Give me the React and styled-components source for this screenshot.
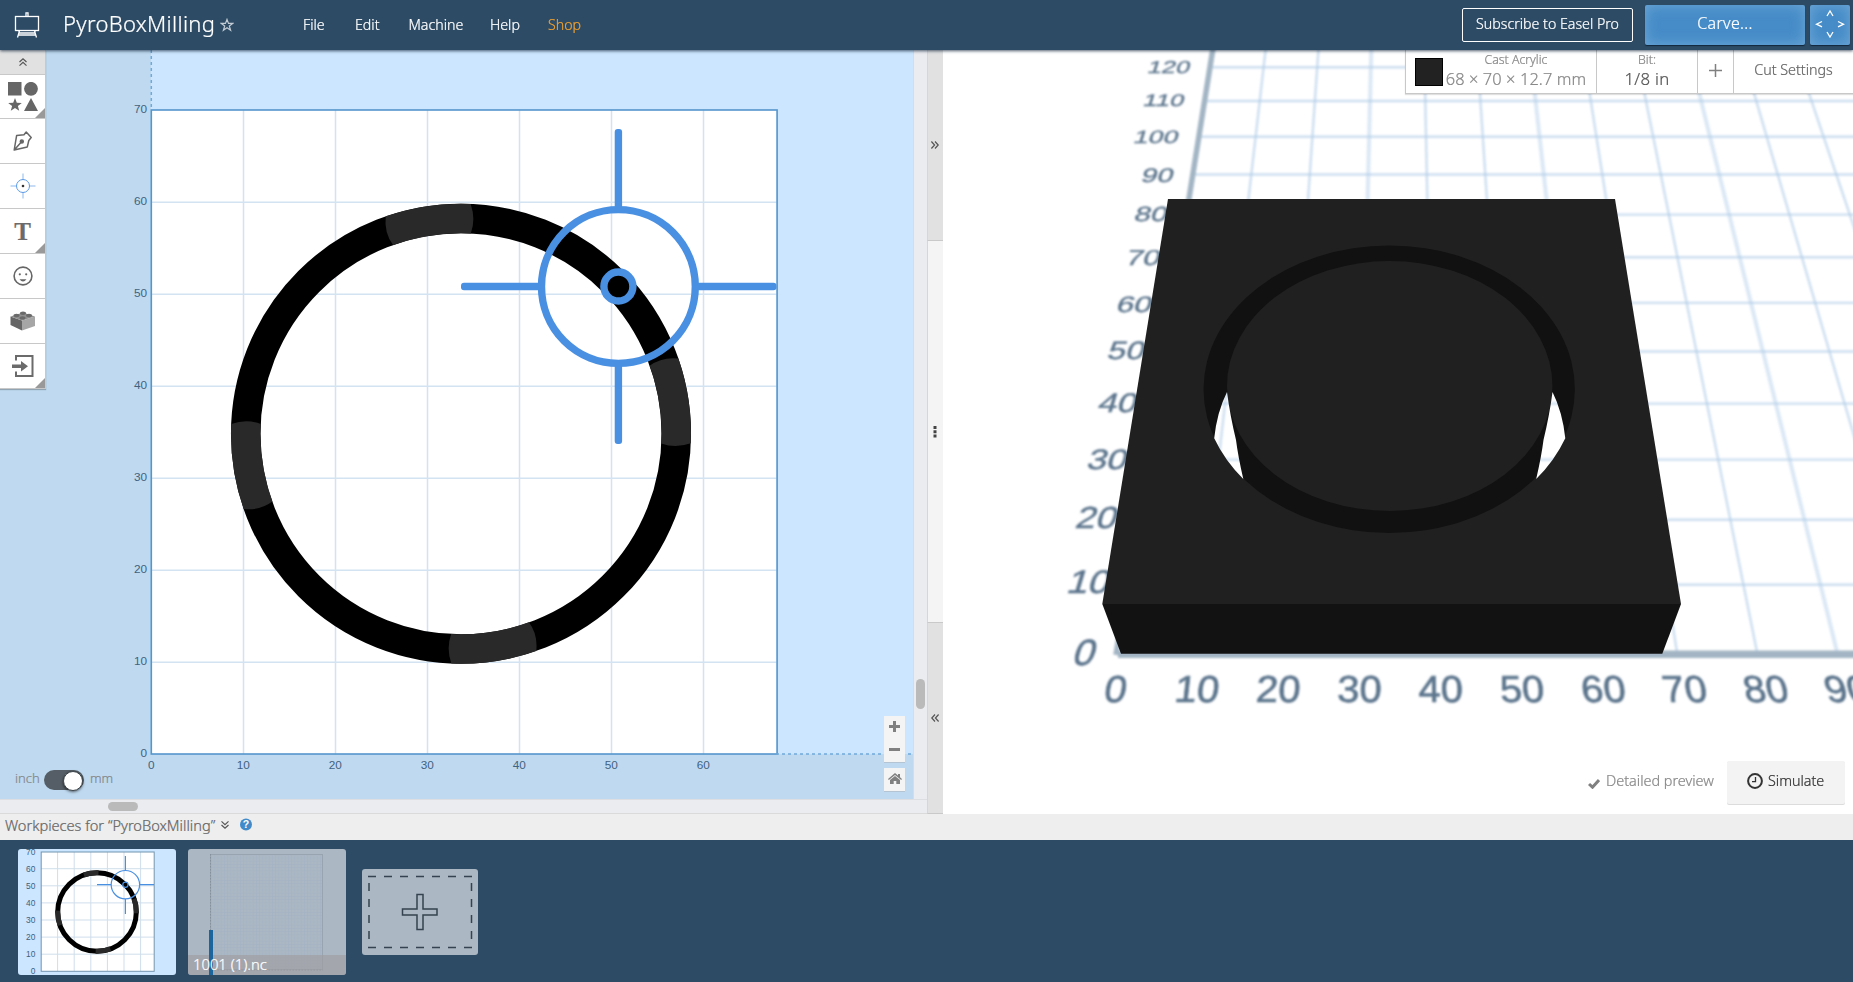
import React from "react";
import styled, { createGlobalStyle, css } from "styled-components";

const Global = createGlobalStyle`
  * { box-sizing: border-box; }
  html, body { margin: 0; padding: 0; overflow: hidden; }
  body { font-family: "Noto Sans", "Open Sans", sans-serif; font-weight: 300; background: #fff; -webkit-text-stroke: 0.22px; }
  svg { display: block; -webkit-text-stroke: 0; }
  button { -webkit-text-stroke: 0.22px; }
`;

const App = styled.div`
  width: 1853px;
  height: 982px;
  display: grid;
  grid-template-rows: 50px 764px 26px 142px;
  overflow: hidden;
`;

/* ---------- header ---------- */
const Header = styled.header`
  position: relative;
  z-index: 5;
  display: flex;
  align-items: center;
  padding: 0 3px 0 14px;
  background: #2d4b65;
  box-shadow: 0 1px 3px rgba(20, 40, 60, 0.75);
  color: #fff;
`;
const Title = styled.h1`
  margin: 0 0 5px 23px;
  width: 157px;
  font-size: 22px;
  font-weight: 300;
  line-height: 30px;
  letter-spacing: 0.3px;
  white-space: nowrap;
`;
const Menu = styled.nav`
  display: flex;
  flex: 1;
  margin: 0 0 1px 69px;
`;
const MenuItem = styled.a`
  width: ${(p) => p.$w}px;
  font-size: 14.2px;
  line-height: 20px;
  white-space: nowrap;
  color: ${(p) => (p.$accent ? "#f0a030" : "#fff")};
`;
const OutlineButton = styled.button`
  width: 171px;
  height: 34px;
  padding: 0 0 4px;
  margin-right: 12px;
  border: 1px solid #fff;
  border-radius: 2px;
  background: transparent;
  color: #fff;
  font: 300 14.2px "Noto Sans", sans-serif;
  white-space: nowrap;
`;
const BlueButton = styled.button`
  width: ${(p) => p.$w}px;
  height: 40px;
  padding: 0 0 4px;
  margin-right: ${(p) => p.$mr || 0}px;
  border: 0;
  border-radius: 2px;
  background: #468cc8;
  box-shadow: inset 0 0 14px rgba(150, 195, 230, 0.5), 0 1px 1px rgba(10, 30, 50, 0.8);
  color: #fff;
  font: 300 16px "Noto Sans", sans-serif;
  letter-spacing: 0.3px;
  display: flex;
  align-items: center;
  justify-content: center;
`;

/* ---------- main area ---------- */
const Main = styled.main`
  display: grid;
  grid-template-columns: 927px 16px 910px;
  min-height: 0;
`;
const Editor = styled.section`
  position: relative;
  display: grid;
  grid-template-columns: 913px 14px;
  grid-template-rows: 749px 15px;
  background: #ebecf0;
`;
const ScrollV = styled.div`
  border-left: 1px solid #d9dbe0;
  padding: 629px 0 0 2px;
`;
const ScrollH = styled.div`
  grid-column: 1 / 3;
  border-top: 1px solid #dcdee2;
  border-bottom: 1px solid #dadada;
  padding: 2px 0 0 108px;
`;
const Thumb = styled.div`
  width: ${(p) => p.$w}px;
  height: ${(p) => p.$h}px;
  border-radius: 5px;
  background: #bababa;
`;
const Toolbar = styled.div`
  position: absolute;
  left: 0;
  top: 0;
  width: 46px;
  border-right: 1px solid #c3cbd2;
  box-shadow: 0 1px 1px rgba(100, 110, 120, 0.5);
`;
const Collapse = styled.div`
  height: 25px;
  display: flex;
  align-items: center;
  justify-content: center;
  background: #e1e1e1;
  border-bottom: 1px solid #c8c8c8;
`;
const Tool = styled.button`
  position: relative;
  display: flex;
  align-items: center;
  justify-content: center;
  width: 45px;
  height: ${(p) => p.$h || 45}px;
  padding: 0;
  border: 0;
  border-bottom: 1px solid #c8c8c8;
  background: #fff;
  ${(p) =>
    p.$more &&
    css`
      &::after {
        content: "";
        position: absolute;
        right: 0;
        bottom: 0;
        border-left: 10px solid transparent;
        border-bottom: 10px solid #999;
      }
    `}
`;
const ToolLetter = styled.span`
  font: 700 25px/26px "Liberation Serif", serif;
  color: #6b6b6b;
  padding-top: 2px;
`;
const Units = styled.div`
  position: absolute;
  left: 15px;
  top: 718px;
  display: flex;
  align-items: center;
  color: #85888c;
  font-size: 13px;
  line-height: 20px;
`;
const UnitName = styled.span`
  width: ${(p) => p.$w}px;
  padding-bottom: 3px;
`;
const Toggle = styled.div`
  width: 40px;
  height: 20px;
  margin: 1px 6px 0 0;
  padding: 1px;
  border-radius: 10px;
  background: #555e66;
  display: flex;
  justify-content: flex-end;
  &::after {
    content: "";
    width: 18px;
    height: 18px;
    border-radius: 50%;
    border: 1px solid #3c444b;
    background: #fff;
    box-shadow: 0 1px 3px rgba(0, 0, 0, 0.6);
  }
`;
const ZoomStack = styled.div`
  position: absolute;
  left: 884px;
  top: 666px;
  display: flex;
  flex-direction: column;
  gap: 6px;
`;
const ZoomBox = styled.div`
  width: 21px;
  height: ${(p) => p.$h}px;
  padding-bottom: 1px;
  background: #f4f4f4;
  box-shadow: 0 1px 0 #b5c4d2;
  display: flex;
  align-items: center;
  justify-content: center;
`;

const Divider = styled.div`
  display: grid;
  grid-template-rows: 191px 382px 191px;
`;
const DividerPart = styled.div`
  display: flex;
  align-items: center;
  justify-content: center;
  padding-right: 1px;
  background: ${(p) => (p.$grip ? "#f4f4f4" : "#e1e1e1")};
  border-left: 1px solid #d6d6d6;
  border-bottom: 1px solid #c9c9c9;
`;

/* ---------- 3D preview ---------- */
const Preview = styled.section`
  position: relative;
  background: #fff;
  overflow: hidden;
`;
const MaterialBar = styled.div`
  position: absolute;
  top: 0;
  right: 0;
  width: 448px;
  height: 44px;
  display: flex;
  background: #fff;
  border: solid #c8c8c8;
  border-width: 0 0 1px 1px;
  box-shadow: 0 1px 1px rgba(0, 0, 0, 0.12);
`;
const BarCell = styled.div`
  width: ${(p) => p.$w}px;
  display: flex;
  align-items: center;
  justify-content: ${(p) => (p.$first ? "flex-start" : "center")};
  border-left: ${(p) => (p.$first ? 0 : "1px solid #c8c8c8")};
  padding: ${(p) => p.$pad || "0"};
  color: ${(p) => p.$color || "#888"};
  font-size: 14.3px;
  white-space: nowrap;
`;
const Swatch = styled.div`
  width: 28px;
  height: 28px;
  flex: none;
  border: 1px solid #000;
  background: #222;
  margin-right: 3px;
`;
const TwoLines = styled.div`
  display: flex;
  flex-direction: column;
  align-items: center;
  padding-bottom: 4px;
  width: ${(p) => (p.$w ? p.$w + "px" : "auto")};
`;
const Small = styled.div`
  font-size: 12.3px;
  line-height: 18px;
  color: #888;
`;
const Large = styled.div`
  font-size: ${(p) => p.$size || 16.4}px;
  line-height: 19px;
  letter-spacing: ${(p) => p.$ls || 0}px;
`;
const PreviewActions = styled.div`
  position: absolute;
  right: 8px;
  bottom: 10px;
  display: flex;
  align-items: center;
  font-size: 14.4px;
`;
const Detailed = styled.div`
  display: flex;
  align-items: center;
  gap: 6px;
  width: 139px;
  padding-bottom: 4px;
  color: #888;
  white-space: nowrap;
  svg { margin-top: 6px; }
`;
const Simulate = styled.button`
  width: 118px;
  height: 43px;
  padding: 0 0 4px 20px;
  display: flex;
  align-items: center;
  gap: 5px;
  border: 0;
  border-radius: 2px;
  background: #f3f3f3;
  box-shadow: 0 1px 0 #dcdcdc;
  color: #333;
  font: 300 14.3px "Noto Sans", sans-serif;
`;

/* ---------- workpieces ---------- */
const WorkBar = styled.div`
  display: flex;
  align-items: center;
  gap: 5px;
  padding: 0 0 5px 5px;
  background: #eeeeee;
  color: #666;
  font-size: 14.6px;
  white-space: nowrap;
`;
const WorkTitle = styled.span`
  width: 210px;
`;
const WorkStrip = styled.footer`
  display: flex;
  align-items: flex-start;
  gap: 12px;
  padding: 9px 18px;
  background: #2d4b65;
`;
const Card = styled.div`
  position: relative;
  width: 158px;
  height: 126px;
  border-radius: 3px;
  overflow: hidden;
  background: ${(p) => (p.$active ? "#cce6ff" : "#abb7c3")};
`;
const CardName = styled.div`
  position: absolute;
  left: 0;
  right: 0;
  bottom: 0;
  height: 20px;
  padding-left: 5px;
  background: rgba(160, 155, 158, 0.6);
  color: #fff;
  font-size: 14.8px;
  line-height: 18px;
  span {
    position: relative;
    z-index: 2;
  }
`;
const AddCard = styled.div`
  width: 116px;
  height: 86px;
  margin: 20px 0 0 4px;
  border-radius: 3px;
  background: #abb7c3;
`;

/* ---------- drawings ---------- */
const EaselLogo = () => (
  <svg width="26" height="28" viewBox="14 11 26 28" fill="none" stroke="#fff" strokeWidth="1.3">
    <rect x="15.5" y="16.5" width="23" height="14" />
    <path d="M26 16v-3.2h2V16M19.5 31l-2 6.5M34.5 31l2 6.5M18 35h18M19 31v2h16v-2" />
  </svg>
);
const Star = () => (
  <svg width="14" height="14" viewBox="0 0 14 14" fill="none" stroke="#c3ccd5" strokeWidth="1.2">
    <path d="M7 1.4l1.5 4h4.2L9.3 8l1.3 4.2L7 9.7l-3.6 2.5L4.7 8 1.3 5.4h4.2z" />
  </svg>
);
const Chevrons = ({ rot = 0, color = "#555" }) => (
  <svg width="10" height="10" viewBox="0 0 10 10" fill="none" stroke={color} strokeWidth="1.2">
    <g transform={`rotate(${rot} 5 5)`}>
      <path d="M1.5 5L5 1.8 8.5 5M1.5 8.6L5 5.4l3.5 3.2" />
    </g>
  </svg>
);

const OX = 151, OY = 704, S = 9.2;
const CX = 461, CY = 383.7;
const polar = (r, deg) => {
  const a = (deg * Math.PI) / 180;
  return `${(CX + r * Math.sin(a)).toFixed(2)} ${(CY - r * Math.cos(a)).toFixed(2)}`;
};
const tabPath = (rot) =>
  `M${polar(230, rot - 19.1)}A230 230 0 0 1 ${polar(230, rot + 2.4)}` +
  `Q${polar(215, rot + 4)} ${polar(200.5, rot + 2.8)}` +
  `A200.5 200.5 0 0 0 ${polar(200.5, rot - 19.8)}Q${polar(215, rot - 21)} ${polar(230, rot - 19.1)}Z`;

const Canvas = () => (
  <svg width="913" height="749" viewBox="0 0 913 749">
    <rect width="914" height="749" fill="#bfdaf0" />
    <rect x={OX} width="763" height={OY} fill="#cce6ff" />
    <rect x={OX} y="60" width="625.6" height="644" fill="#fff" />
    <g stroke="#d3e3f1" strokeWidth="1.5">
      {[1, 2, 3, 4, 5, 6].map((n) => (
        <React.Fragment key={n}>
          <path d={`M${OX + n * 92 + 0.5} 60V704`} />
          <path d={`M${OX} ${OY - n * 92 + 0.2}H776.6`} />
        </React.Fragment>
      ))}
    </g>
    <rect x={OX + 0.3} y="60" width="625.8" height="644" fill="none" stroke="#5595cc" strokeWidth="1.6" />
    <path d="M151.3 0V60M776 704H914" stroke="#6fa9da" strokeWidth="1.5" strokeDasharray="3 3" fill="none" />
    <circle cx={CX} cy={CY} r="215.3" fill="none" stroke="#000" strokeWidth="29.5" />
    {[0, 90, 180, 270].map((r) => <path key={r} d={tabPath(r)} fill="#292929" />)}
    <g fill="none" stroke="#4a90e2" strokeWidth="7.4">
      <circle cx="618.4" cy="236.5" r="76.9" />
      <circle cx="618.4" cy="236.5" r="14.5" fill="#000" />
    </g>
    <g fill="#4a90e2">
      <rect x="614.7" y="79" width="7.4" height="80" rx="3" />
      <rect x="614.7" y="314" width="7.4" height="80" rx="3" />
      <rect x="461" y="232.8" width="80" height="7.4" rx="3" />
      <rect x="696" y="232.8" width="80.5" height="7.4" rx="3" />
    </g>
    <g fontFamily="Liberation Sans, Arial, sans-serif" fontSize="11.8" fill="#42627f">
      {[0, 10, 20, 30, 40, 50, 60, 70].map((n) => (
        <text key={n} x="147" y={OY - n * S + 3} textAnchor="end">{n}</text>
      ))}
      {[0, 10, 20, 30, 40, 50, 60].map((n) => (
        <text key={n} x={OX + n * S + 0.3} y="719" textAnchor="middle">{n}</text>
      ))}
    </g>
  </svg>
);

/* ground plane (mm) to screen */
const VC = 0.004122;
const ground = (X, Y) => {
  const w = 1 + VC * Y;
  return [(1116 + 5.77 * Y + 8.02 * X) / w, (655 - 4.62 * Y) / w];
};
const seg = (x1, y1, x2, y2) => {
  const a = ground(x1, y1), b = ground(x2, y2);
  return `M${a[0].toFixed(1)} ${a[1].toFixed(1)}L${b[0].toFixed(1)} ${b[1].toFixed(1)}`;
};
/* value, left edge, top, bottom, digit advance */
const sideLabels = [
  [120, 1148, 61, 73.3, 13.7], [110, 1143.5, 94, 106, 13.9], [100, 1134, 130, 142.7, 14.4],
  [90, 1141.5, 168, 182, 15.5], [80, 1134.5, 206.7, 221.3, 16], [70, 1126, 249.7, 265, 16.6],
  [60, 1116.5, 295.7, 311.7, 17.1], [50, 1107.5, 341, 359, 17.9], [40, 1098, 393, 412.3, 18.7],
  [30, 1087, 449.3, 469.3, 19.3], [20, 1075.5, 506, 527.7, 19.8], [10, 1067, 570, 593.3, 20.5],
  [0, 1072.5, 639, 665, 21],
];
const Scene = () => (
  <svg width="910" height="764" viewBox="943 50 910 764">
    <defs>
      <filter id="soft" x="-5%" y="-5%" width="110%" height="110%">
        <feGaussianBlur stdDeviation="0.9" />
      </filter>
      <mask id="cut" maskUnits="userSpaceOnUse" x="943" y="50" width="910" height="764">
        <rect x="943" y="50" width="910" height="764" fill="#fff" />
        {["", "translate(2779.5 0) scale(-1 1)"].map((t) => (
          <path key={t} transform={t} fill="#000"
            d="M1227 392Q1217 412 1214.2 438.3Q1225 461 1243.3 479Q1238 456 1236 440Q1230 415 1227 392Z" />
        ))}
      </mask>
    </defs>
    <g filter="url(#soft)">
      <g fill="none" stroke="#b0cde8" strokeWidth="2.4">
        {Array.from({ length: 16 }, (_, i) => (
          <path key={i} d={seg((i + 1) * 10, 0, (i + 1) * 10, 135)}
            strokeWidth={i % 3 === 2 ? 4 : 2.4} opacity={i % 3 === 2 ? 0.45 : 0.65} />
        ))}
        {Array.from({ length: 12 }, (_, i) => (
          <path key={i} d={seg(0, (i + 1) * 10, 170, (i + 1) * 10)} opacity="0.65" />
        ))}
      </g>
      <path d={seg(0, 0, 0, 135)} stroke="#a3b5c4" strokeWidth="5.5" />
      <path d="M1118 654.3H1860" stroke="#a3b5c4" strokeWidth="7.5" />
      <g fontFamily="Liberation Sans, Arial, sans-serif" fontSize="20" fill="#5b748c" stroke="#5b748c" strokeWidth="0.35">
        {sideLabels.map(([n, x, t, b, adv]) => {
          const d = (b - t) / 14.3;
          return (
            <text key={n} transform={`matrix(${(adv * 1.03) / 11.12} 0 ${-0.3 * d} ${d} ${x - 1.5} ${b})`}>{n}</text>
          );
        })}
        {[0, 10, 20, 30, 40, 50, 60, 70, 80, 90].map((n) => {
          const x = 1116 + n * 8.12;
          const k = (x - 1400) / 1811;
          return (
            <text key={n} textAnchor="middle"
              transform={`matrix(2 0 ${k * 1.88} 1.88 ${x + k * 13} 702.3)`}>{n}</text>
          );
        })}
      </g>
    </g>
    <g mask="url(#cut)">
      <path d="M1102.3 604H1681L1662.3 653.7H1121z" fill="#121212" />
      <path d="M1168 199H1615L1681 604H1102.3z" fill="#202020" />
      <ellipse cx="1389.2" cy="389.3" rx="185.7" ry="143.7" fill="#111" />
      <ellipse cx="1389.7" cy="386" rx="162.7" ry="125" fill="#202020" />
    </g>
  </svg>
);

const MiniBoard = () => (
  <svg width="158" height="126" viewBox="18 849 158 126">
    <rect x="41" y="852" width="113.5" height="119.5" fill="#fff" />
    <g stroke="#cfdeeb" strokeWidth="1">
      {[1, 2, 3, 4, 5, 6].map((n) => (
        <path key={n} d={`M${41 + n * 16.6} 852V971M41 ${971.3 - n * 17.1}H154`} />
      ))}
    </g>
    <rect x="41.2" y="852" width="113" height="119.3" fill="none" stroke="#7193b0" />
    <circle cx="97" cy="912" r="39.3" fill="none" stroke="#000" strokeWidth="5" />
    <circle cx="97" cy="912" r="39.3" fill="none" stroke="#292929" strokeWidth="5"
      strokeDasharray="15 46.73" strokeDashoffset="-48" />
    <g fill="none" stroke="#4a90e2" strokeWidth="1.2">
      <circle cx="125.4" cy="884.7" r="14.2" />
      <circle cx="125.4" cy="884.7" r="2.6" />
      <path d="M125.4 856v14.5M125.4 899v15M97 884.7h14M139.6 884.7H154" />
    </g>
    <g fontFamily="Liberation Sans, Arial, sans-serif" fontSize="8.4" fill="#3f5f7c" textAnchor="end">
      {[0, 10, 20, 30, 40, 50, 60, 70].map((n) => (
        <text key={n} x="35.3" y={974.2 - n * 1.708}>{n}</text>
      ))}
    </g>
  </svg>
);
const MiniToolpath = () => (
  <svg width="158" height="126" viewBox="188 849 158 126">
    <defs>
      <pattern id="fine" width="3.2" height="3.2" patternUnits="userSpaceOnUse">
        <path d="M0 0H3.2M0 0V3.2" stroke="#9fb0c1" strokeWidth="0.6" fill="none" />
      </pattern>
    </defs>
    <rect x="210.5" y="854.5" width="112" height="115" fill="url(#fine)" stroke="#98a5b1" />
    <path d="M210.5 854V970H323" fill="none" stroke="#85919d" strokeDasharray="1.5 1.5" />
  </svg>
);
const ToolpathBar = styled.div`
  position: absolute;
  z-index: 1;
  left: 21px;
  bottom: 0;
  width: 4px;
  height: 45px;
  background: #1c649c;
`;

const JogArrows = () => (
  <svg width="30" height="30" viewBox="0 0 30 30" fill="none" stroke="#fff" strokeWidth="1.3">
    <path d="M12 8l3-5 3 5M12 24l3 5 3-5M7 13.5L1.5 16.2l5.5 2.7M23 13.5l5.5 2.7-5.5 2.7" />
  </svg>
);

export default function EaselApp() {
  return (
    <App>
      <Global />
      <Header>
        <EaselLogo />
        <Title>PyroBoxMilling</Title>
        <Star />
        <Menu>
          <MenuItem $w={52}>File</MenuItem>
          <MenuItem $w={53.5}>Edit</MenuItem>
          <MenuItem $w={81.5}>Machine</MenuItem>
          <MenuItem $w={58}>Help</MenuItem>
          <MenuItem $w={40} $accent>Shop</MenuItem>
        </Menu>
        <OutlineButton>Subscribe to Easel Pro</OutlineButton>
        <BlueButton $w={160} $mr={5}>Carve...</BlueButton>
        <BlueButton $w={40}><JogArrows /></BlueButton>
      </Header>

      <Main>
        <Editor>
          <Canvas />
          <ScrollV><Thumb $w={9} $h={30} /></ScrollV>
          <ScrollH><Thumb $w={30} $h={9} /></ScrollH>
          <Toolbar>
            <Collapse><Chevrons /></Collapse>
            <Tool $h={44} $more>
              <svg width="32" height="30" viewBox="0 0 32 30" fill="#666">
                <path d="M1 0h13.5v13.5H1zM8 16l1.8 4.7 5 .2-3.9 3.1 1.3 4.8L8 26l-4.2 2.8L5.1 24l-3.9-3.1 5-.2zM24 16l7 13H17z" />
                <circle cx="24" cy="6.8" r="6.9" />
              </svg>
            </Tool>
            <Tool>
              <svg width="20" height="20" viewBox="0 0 20 20" fill="none" stroke="#666" strokeWidth="1.5" strokeLinejoin="round">
                <path d="M1.2 19L3.6 4.6 11 3.8 13.2 1l5 5.5-2.4 3-1.5 6.4zM1.2 19l6.5-7.2" />
                <circle cx="8.8" cy="10.6" r="1.5" fill="#666" />
              </svg>
            </Tool>
            <Tool>
              <svg width="26" height="26" viewBox="0 0 26 26" fill="none" stroke="#5b9ae6" strokeWidth="1">
                <circle cx="13" cy="13" r="6.5" />
                <path d="M13 .5v6M13 19.5v6M.5 13h6M19.5 13h6" opacity=".7" />
                <circle cx="13" cy="13" r="1.3" fill="#333" stroke="none" />
              </svg>
            </Tool>
            <Tool $more><ToolLetter>T</ToolLetter></Tool>
            <Tool>
              <svg width="20" height="20" viewBox="0 0 20 20" fill="none" stroke="#666" strokeWidth="1.6">
                <circle cx="10" cy="10" r="8.9" />
                <circle cx="6.8" cy="8.3" r="1.1" fill="#666" stroke="none" />
                <circle cx="13.2" cy="8.3" r="1.1" fill="#666" stroke="none" />
                <path d="M6.5 13.2h7q-3.5 4.4-7 0z" fill="#666" stroke="none" />
              </svg>
            </Tool>
            <Tool>
              <svg width="26" height="20" viewBox="0 0 26 20">
                <path d="M.5 5.5L12 9.5V19.5L.5 14z" fill="#666" />
                <path d="M25 5.5L12 9.5V19.5L25 15z" fill="#a6a6a6" />
                <path d="M.5 5.5L13 1.5 25 5.5 12 9.5z" fill="#909090" />
                <g fill="#6a6a6a">
                  <ellipse cx="13" cy="2.3" rx="3" ry="1.7" /><ellipse cx="6.5" cy="4.5" rx="3" ry="1.7" />
                  <ellipse cx="19" cy="4.5" rx="3" ry="1.7" /><ellipse cx="12.5" cy="6.9" rx="3" ry="1.7" />
                </g>
              </svg>
            </Tool>
            <Tool $more>
              <svg width="22" height="24" viewBox="0 0 22 24" fill="none" stroke="#6b6b6b" strokeWidth="2">
                <path d="M4 6.5V2h16.5v20H4v-4.5" />
                <path d="M0 10.5h9V7l7 5.2-7 5.2v-3.5H0z" fill="#6b6b6b" stroke="none" />
              </svg>
            </Tool>
          </Toolbar>
          <Units>
            <UnitName $w={29}>inch</UnitName>
            <Toggle />
            <UnitName $w={24}>mm</UnitName>
          </Units>
          <ZoomStack>
            <ZoomBox $h={46}>
              <svg width="13" height="36" viewBox="0 0 13 36" fill="#808080">
                <path d="M5 0h3v4h4v3H8v4H5V7H1V4h4zM1 27h11v3H1z" />
              </svg>
            </ZoomBox>
            <ZoomBox $h={23}>
              <svg width="14" height="12" viewBox="0 0 14 12" fill="#808080">
                <path d="M7 0l3 2.6V1h2v3.3L14 6l-.8 1L7 1.9.8 7 0 6zM7 3l5 4.1V11H8.3V8H5.7v3H2V7.1z" />
              </svg>
            </ZoomBox>
          </ZoomStack>
        </Editor>

        <Divider>
          <DividerPart><Chevrons rot={90} /></DividerPart>
          <DividerPart $grip>
            <svg width="4" height="12" fill="#444"><path d="M.5 0h3v3h-3zM.5 4.3h3v3h-3zM.5 8.6h3v3h-3z" /></svg>
          </DividerPart>
          <DividerPart><Chevrons rot={-90} /></DividerPart>
        </Divider>

        <Preview>
          <Scene />
          <MaterialBar>
            <BarCell $w={190} $first $pad="0 0 0 9px">
              <Swatch />
              <TwoLines $w={140}>
                <Small>Cast Acrylic</Small>
                <Large $ls={0.1}>68 × 70 × 12.7 mm</Large>
              </TwoLines>
            </BarCell>
            <BarCell $w={101} $color="#555">
              <TwoLines><Small>Bit:</Small><Large $size={16.8} $ls={0.3}>1/8 in</Large></TwoLines>
            </BarCell>
            <BarCell $w={36} $pad="0 0 3px">
              <svg width="13" height="13" stroke="#808080" strokeWidth="1.5"><path d="M6.5 0v13M0 6.5h13" /></svg>
            </BarCell>
            <BarCell $w={120} $color="#666" $pad="0 0 5px">Cut Settings</BarCell>
          </MaterialBar>
          <PreviewActions>
            <Detailed>
              <svg width="12" height="10" viewBox="0 0 12 10" fill="none" stroke="#808080" strokeWidth="3"><path d="M1 5l3.500 3.200L11 1" /></svg>
              Detailed preview
            </Detailed>
            <Simulate>
              <svg width="16" height="16" viewBox="0 0 16 16" fill="none" stroke="#333" strokeWidth="2">
                <circle cx="8" cy="8" r="6.900" /><path d="M8.500 4v4.700H5" strokeWidth="1.300" />
              </svg>
              Simulate
            </Simulate>
          </PreviewActions>
        </Preview>
      </Main>

      <WorkBar>
        <WorkTitle>Workpieces for “PyroBoxMilling”</WorkTitle>
        <Chevrons rot={180} />
        <svg width="20" height="13" viewBox="-5 0 20 13">
          <circle cx="6" cy="6.500" r="6" fill="#428bca" />
          <text x="6" y="10.300" textAnchor="middle" fontSize="10.500" fontWeight="700" fontFamily="Liberation Sans" fill="#fff">?</text>
        </svg>
      </WorkBar>
      <WorkStrip>
        <Card $active><MiniBoard /></Card>
        <Card>
          <MiniToolpath />
          <CardName><span>1001 (1).nc</span></CardName>
          <ToolpathBar />
        </Card>
        <AddCard>
          <svg width="116" height="86" fill="none" stroke="#34434f">
            <path d="M6 7.500H110M6 78.500H110" strokeWidth="1.500" strokeDasharray="8 8" />
            <path d="M7 14V72M109.500 14V72" strokeWidth="1.500" strokeDasharray="8 8" />
            <path d="M55 25.500h6v14.500h14v6H61v14.500h-6V46H40.500v-6H55z" strokeWidth="1.500" />
          </svg>
        </AddCard>
      </WorkStrip>
    </App>
  );
}
